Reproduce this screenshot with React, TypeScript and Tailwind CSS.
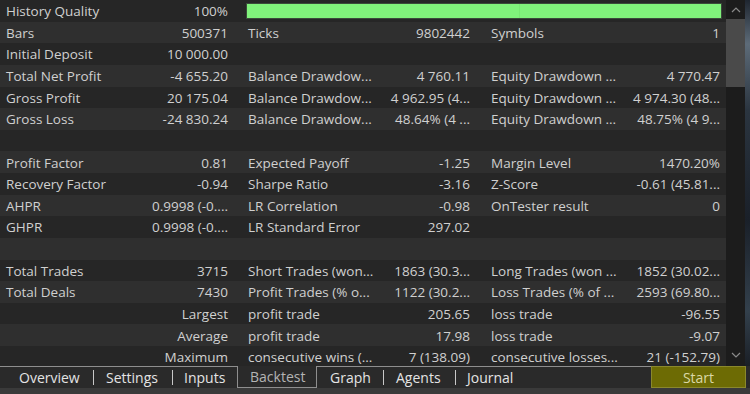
import React from 'react';

type Row = [string, string, string, string, string, string];

const rows: (Row | null)[] = [
  null,
  ['Bars', '500371', 'Ticks', '9802442', 'Symbols', '1'],
  ['Initial Deposit', '10 000.00', '', '', '', ''],
  ['Total Net Profit', '-4 655.20', 'Balance Drawdow...', '4 760.11', 'Equity Drawdown ...', '4 770.47'],
  ['Gross Profit', '20 175.04', 'Balance Drawdow...', '4 962.95 (4...', 'Equity Drawdown ...', '4 974.30 (48...'],
  ['Gross Loss', '-24 830.24', 'Balance Drawdow...', '48.64% (4 ...', 'Equity Drawdown ...', '48.75% (4 9...'],
  ['', '', '', '', '', ''],
  ['Profit Factor', '0.81', 'Expected Payoff', '-1.25', 'Margin Level', '1470.20%'],
  ['Recovery Factor', '-0.94', 'Sharpe Ratio', '-3.16', 'Z-Score', '-0.61 (45.81...'],
  ['AHPR', '0.9998 (-0....', 'LR Correlation', '-0.98', 'OnTester result', '0'],
  ['GHPR', '0.9998 (-0....', 'LR Standard Error', '297.02', '', ''],
  ['', '', '', '', '', ''],
  ['Total Trades', '3715', 'Short Trades (won...', '1863 (30.3...', 'Long Trades (won ...', '1852 (30.02...'],
  ['Total Deals', '7430', 'Profit Trades (% o...', '1122 (30.2...', 'Loss Trades (% of ...', '2593 (69.80...'],
  ['', 'Largest', 'profit trade', '205.65', 'loss trade', '-96.55'],
  ['', 'Average', 'profit trade', '17.98', 'loss trade', '-9.07'],
  ['', 'Maximum', 'consecutive wins (...', '7 (138.09)', 'consecutive losses...', '21 (-152.79)'],
];

const Label = ({ text, pl }: { text: string; pl: string }) => (
  <div className={`overflow-hidden whitespace-nowrap ${pl}`}>{text}</div>
);

const Value = ({ text, pr }: { text: string; pr: string }) => (
  <div className={`overflow-hidden whitespace-nowrap text-right ${pr}`}>{text}</div>
);

const Chevron = ({ up }: { up?: boolean }) => (
  <svg width="10" height="6" viewBox="0 0 10 6" className="text-[#8a8a8a]">
    <polyline
      points={up ? '1,5 5,1 9,5' : '1,1 5,5 9,1'}
      fill="none"
      stroke="currentColor"
      strokeWidth="1.2"
    />
  </svg>
);

const Sep = () => <div className="w-px h-[15px] bg-[#c8c8c8]" />;

export default function App() {
  return (
    <div className="w-[750px] h-[394px] bg-[#2a2a2a] flex flex-col overflow-hidden font-['Open_Sans',sans-serif] text-[13.5px] text-[#d0d0d0]">
      {/* Results table + scrollbar */}
      <div className="flex h-[366px]">
        <div className="w-[726px] flex flex-col overflow-hidden">
          {rows.map((r, i) => (
            <div
              key={i}
              className={`grid grid-cols-[142px_100px_142px_100px_142px_100px] h-[21.625px] shrink-0 items-center pt-px ${
                i % 2 ? 'bg-[#2f2f2f]' : 'bg-[#262626]'
              }`}
            >
              {r === null ? (
                <>
                  <Label text="History Quality" pl="pl-[6px]" />
                  <Value text="100%" pr="pr-[14px]" />
                  <div className="col-span-4 px-[4px]">
                    <div className="relative h-[16px] -mt-px bg-[#80f27b] border border-[#3b4a3a]">
                      <div className="absolute left-[272px] top-0 w-px h-full bg-[#78e873]" />
                    </div>
                  </div>
                </>
              ) : (
                <>
                  <Label text={r[0]} pl="pl-[6px]" />
                  <Value text={r[1]} pr="pr-[14px]" />
                  <Label text={r[2]} pl="pl-[6px]" />
                  <Value text={r[3]} pr="pr-[14px]" />
                  <Label text={r[4]} pl="pl-[7px]" />
                  <Value text={r[5]} pr="pr-[6px]" />
                </>
              )}
            </div>
          ))}
        </div>

        {/* Scrollbar */}
        <div className="w-[19px] bg-[#1c1c1c] flex flex-col">
          <div className="h-[19px] flex items-center justify-center">
            <Chevron up />
          </div>
          <div className="h-[68px] bg-[#4a4a4a]" />
          <div className="flex-1" />
          <div className="h-[22px] flex items-center justify-center">
            <Chevron />
          </div>
        </div>
        <div className="w-[5px] bg-[linear-gradient(180deg,#1f2630_0%,#5d6b78_12%,#2b3540_30%,#1a2029_60%,#33404c_85%,#1a1f26_100%)]" />
      </div>

      {/* Tab bar */}
      <div className="flex h-[22px] text-[14px] text-[#e4e4e4]">
        <div className="w-[237px] flex items-center border-t border-[#8e8e8e]">
          <div className="w-[93px] pl-[19px]">Overview</div>
          <Sep />
          <div className="w-[78px] pl-[12px]">Settings</div>
          <Sep />
          <div className="flex-1 pl-[11px]">Inputs</div>
        </div>
        <div className="w-[80px] flex items-center pl-[12px] border-l border-r border-b border-[#8e8e8e] text-[#b4b4b4]">
          Backtest
        </div>
        <div className="w-[334px] flex items-center border-t border-[#8e8e8e]">
          <div className="w-[66px] pl-[13px]">Graph</div>
          <Sep />
          <div className="w-[71px] pl-[12px]">Agents</div>
          <Sep />
          <div className="flex-1 pl-[11px]">Journal</div>
        </div>
        <div className="w-[95px] flex items-center justify-center bg-[#6d6b04] border border-[#8a882c] text-[#dbd8a6]">
          Start
        </div>
      </div>
      <div className="flex-1 bg-[#3a3a3a]" />
    </div>
  );
}
